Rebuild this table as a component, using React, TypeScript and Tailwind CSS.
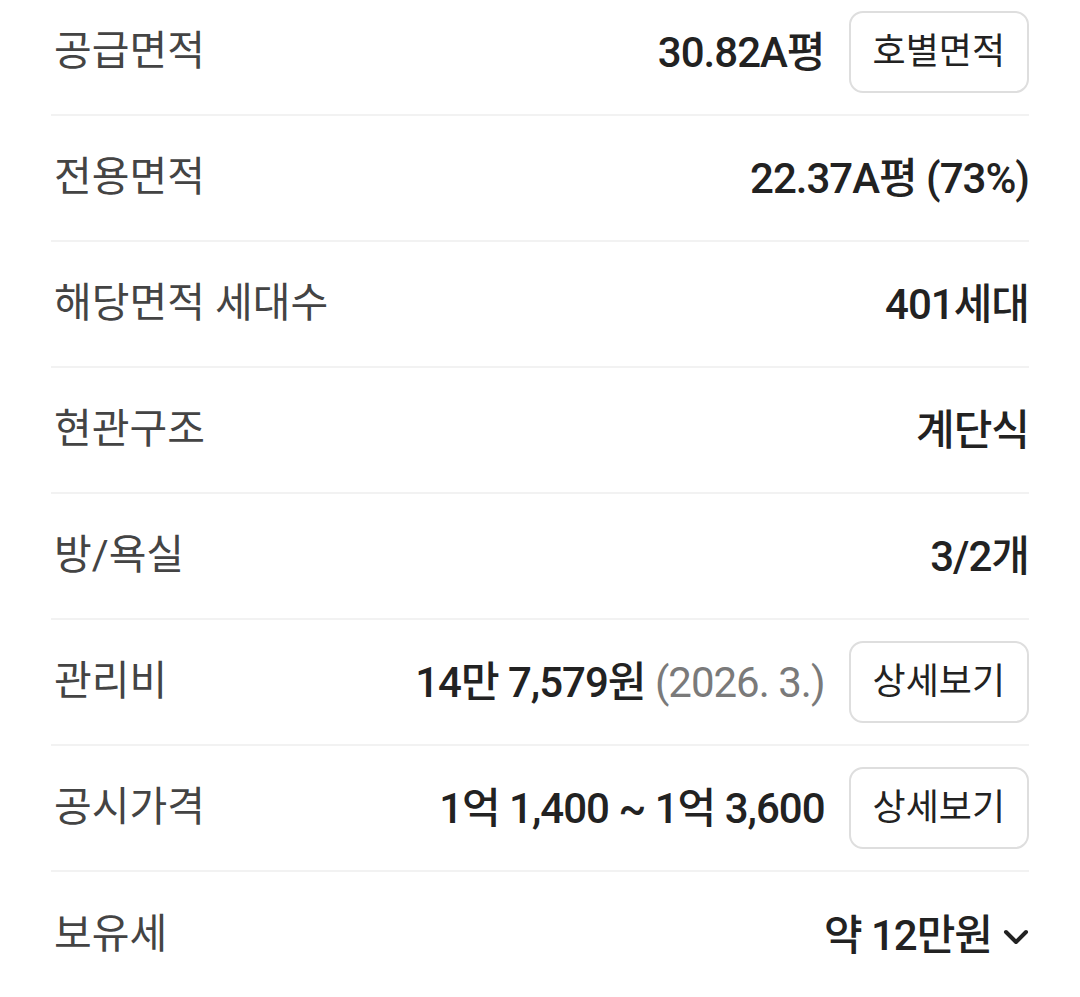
import React from "react";

type Row = {
  label: string;
  value: React.ReactNode;
  button?: string;
  chevron?: boolean;
};

const rows: Row[] = [
  { label: "공급면적", value: "30.82A평", button: "호별면적" },
  { label: "전용면적", value: "22.37A평 (73%)" },
  { label: "해당면적 세대수", value: "401세대" },
  { label: "현관구조", value: "계단식" },
  { label: "방/욕실", value: "3/2개" },
  {
    label: "관리비",
    value: (
      <>
        14만 7,579원 <span className="font-normal text-[#7a7a7a]">(2026. 3.)</span>
      </>
    ),
    button: "상세보기",
  },
  { label: "공시가격", value: "1억 1,400 ~ 1억 3,600", button: "상세보기" },
  { label: "보유세", value: "약 12만원", chevron: true },
];

export default function App() {
  return (
    <div
      className="min-h-[997px] bg-white px-[51px] mt-[-10px]"
      style={{ fontFamily: 'Roboto, "Noto Sans CJK KR", sans-serif' }}
    >
      {rows.map((r, i) => (
        <div
          key={r.label}
          className={
            "flex h-[126px] items-center justify-between " +
            (i < rows.length - 1 ? "border-b-2 border-[#f2f2f2]" : "")
          }
        >
          <span className="pl-[3px] text-[41px] text-[#444444]">{r.label}</span>
          <div className="flex items-center">
            <span className="text-[42px] font-medium tracking-[-1px] text-[#222222]">
              {r.value}
            </span>
            {r.chevron && (
              <svg
                width="26"
                height="16"
                viewBox="0 0 26 16"
                className="ml-[11px] mt-[4px]"
                fill="none"
                stroke="#222"
                strokeWidth="4"
                strokeLinecap="round"
                strokeLinejoin="round"
              >
                <path d="M3 3l10 10 10-10" />
              </svg>
            )}
            {r.button && (
              <button className="ml-[24px] h-[82px] rounded-[14px] border-2 border-[#dedede] bg-white px-[22px] text-[36px] text-[#222222]">
                {r.button}
              </button>
            )}
          </div>
        </div>
      ))}
    </div>
  );
}
